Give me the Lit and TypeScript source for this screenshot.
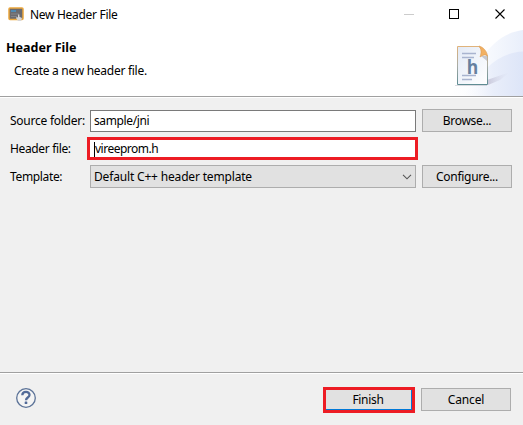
import { LitElement, html, css, svg } from "lit";
import { customElement } from "lit/decorators.js";

const appIcon = html`<svg width="17" height="16" viewBox="0 0 17 16">
  <rect x="1" y="1" width="14" height="11.500" rx="1" fill="#6b6a6e" stroke="#eba63c" stroke-width="1.500"/>
  <path d="M3 4h5" stroke="#3f9bd8" stroke-width="1.300"/>
  <path d="M3 7h8M3 9.500h6" stroke="#858488"/>
  <path d="M10 7.500v3l-1.200-.4-.8 1 2 2.900h3l1-3-2.600-1.200v-2.300z" fill="#d6d5d5"/>
</svg>`;

const headerArt = svg`
  <defs>
    <linearGradient id="sweep" x1="0" y1="0" x2="1" y2="0">
      <stop offset="0" stop-color="#fff"/><stop offset=".4" stop-color="#fbfcfe"/><stop offset="1" stop-color="#e9effb"/>
    </linearGradient>
    <linearGradient id="wave" x1="0" y1="0" x2="1" y2="0">
      <stop offset="0" stop-color="#f6f8fd" stop-opacity="0"/><stop offset=".5" stop-color="#e9eefa"/><stop offset="1" stop-color="#dde5f8"/>
    </linearGradient>
    <linearGradient id="page" x1="0" y1="0" x2="1" y2="1">
      <stop offset="0" stop-color="#e3eaf6"/><stop offset="1" stop-color="#fff"/>
    </linearGradient>
    <linearGradient id="edge" x1="0" y1="0" x2="0" y2="1">
      <stop offset="0" stop-color="#e0b37b"/><stop offset=".5" stop-color="#a9aca5"/><stop offset="1" stop-color="#5f8c93"/>
    </linearGradient>
    <linearGradient id="shade" x1="0" y1="0" x2="1" y2="0">
      <stop offset="0" stop-color="#a9a4bd" stop-opacity=".55"/><stop offset="1" stop-color="#d5d8ea" stop-opacity="0"/>
    </linearGradient>
  </defs>
  <path d="M0 67C35 35 40 6 75 1V67Z" fill="url(#sweep)"/>
  <path d="M15 67C35 40 50 24 75 22.500V67Z" fill="url(#wave)"/>
  <path d="M39 51L62 43L52 51L40 56Z" fill="url(#shade)"/>
  <path d="M7 56.500h32" stroke="#a8aab5" opacity=".4"/>
  <path d="M9.500 17.500H31L39.500 27V55.500H9.500Z" fill="url(#page)" stroke="url(#edge)"/>
  <path d="M33 27L39 27V32Z" fill="#8e8f9c" opacity=".45"/>
  <path d="M31 17C35 18 39 22 39.500 27C37 25 35 26 32 28C33.500 24 33.500 20 31 17Z" fill="#f2b062" stroke="#dc9a50" stroke-width=".6"/>
  <path d="M14 24.500H28M14 28.500H26M14 46.500H28M14 50.500H24" stroke="#a9b4cf" stroke-width="1.300"/>
  <text x="18.800" y="45" class="glyph" textLength="11.500" lengthAdjust="spacingAndGlyphs">h</text>`;

@customElement("app-root")
export class AppRoot extends LitElement {
  static styles = css`
    :host { display: flex; flex-direction: column; width: 523px; height: 425px; overflow: hidden;
      background: #f0f0f0; color: #000; font: 12px/16px "Noto Sans", sans-serif; }
    * { box-sizing: border-box; }
    svg { display: block; }
    span { white-space: pre; }
    .titlebar { display: flex; align-items: center; height: 29px; background: #fff; padding-left: 8px; }
    .title { margin-left: 5px; flex: 1; letter-spacing: -0.3px; }
    .banner { display: flex; justify-content: space-between; height: 69px; background: #fff;
      border-bottom: 1px solid #fff; box-shadow: inset 0 -1px #a0a0a0; }
    .heading { padding: 11px 0 0 6px; display: flex; flex-direction: column; }
    .name { font-weight: 700; font-size: 12.5px; letter-spacing: 0; }
    .desc { margin: 7px 0 0 8px; letter-spacing: -0.28px; }
    .art { height: 67px; width: 75px; }
    .glyph { font: 700 19px "Open Sans", sans-serif; fill: #66809f; }
    .form { flex: 1; display: grid; grid-template-columns: 80px 326px 90px;
      grid-template-rows: 23px 23px 23px; row-gap: 5px; padding: 11px 0 0 10px; align-items: center; }
    .btn { display: flex; align-items: center; justify-content: center; height: 23px; width: 90px;
      background: #e1e1e1; border: 1px solid #adadad; letter-spacing: -0.3px; }
    .form .btn { margin-left: 6px; }
    .l1 { letter-spacing: -0.25px; }
    .l2 { letter-spacing: -0.35px; }
    .l3 { letter-spacing: -0.35px; }
    .v1 { letter-spacing: -0.38px; }
    .v2 { letter-spacing: -0.5px; }
    .v3 { letter-spacing: -0.17px; }
    .field { height: 22px; background: #fff; border: 1px solid #7a7a7a; padding: 2px 0 0 3px; }
    .marked { position: relative; height: 23px; width: 331px; margin-left: -3px; border: 3px solid #ed1c24;
      background: #fff; padding: 1px 0 0 4px; display: flex; align-items: center; }
    .caret { width: 1px; height: 15px; background: #000; }
    .combo { display: flex; align-items: center; justify-content: space-between; height: 23px;
      background: #e1e1e1; border: 1px solid #adadad; padding: 0 3px; }
    .footer { height: 53px; border-top: 1px solid #a0a0a0; box-shadow: inset 0 1px #fff; display: flex;
      padding: 14px 12px 0 15px; }
    .help { flex: 1; }
    .finish { height: 26px; width: 92px; border: 3px solid #ed1c24; margin-right: 6px; }
    .finish .btn { width: 86px; height: 20px; border: 0; padding-right: 2px; box-shadow: inset -1px -1px #0078d7; }
    .cancel { margin-top: 1px; letter-spacing: -0.15px; }
  `;

  render() {
    return html`
      <div class="titlebar">${appIcon}<span class="title">New Header File</span>
        <svg width="120" height="29" viewBox="403 0 120 29" fill="none">
          <path d="M404 14.500h10" stroke="#ccc"/>
          <rect x="449.500" y="9.500" width="9" height="9" stroke="#000"/>
          <path d="M495.500 9.500l9 9M504.500 9.500l-9 9" stroke="#000" stroke-width="1.100"/>
        </svg>
      </div>
      <div class="banner">
        <div class="heading"><span class="name">Header File</span><span class="desc">Create a new header file.</span></div>
        <svg class="art" viewBox="0 0 75 67">${headerArt}</svg>
      </div>
      <div class="form">
        <span class="l1">Source folder:</span>
        <div class="field"><span class="v1">sample/jni</span></div>
        <div class="btn"><span>Browse...</span></div>
        <span class="l2">Header file:</span>
        <div class="marked"><div class="caret"></div><span class="v2">vireeprom.h</span></div>
        <i></i>
        <span class="l3">Template:</span>
        <div class="combo"><span class="v3">Default C++ header template</span>
          <svg width="10" height="6" viewBox="0 0 10 6" fill="none"><path d="M1 .8L5 4.800L9 .8" stroke="#555" stroke-width="1.100"/></svg>
        </div>
        <div class="btn"><span>Configure...</span></div>
      </div>
      <div class="footer">
        <div class="help"><svg width="22" height="22" viewBox="0 0 22 22">
          <circle cx="11" cy="11" r="9.300" fill="#f4f4f4" stroke="#5c7398" stroke-width="1.300"/>
          <path d="M7.300 8.300C7.400 3.800 14.700 4 14.500 8C14.400 10.500 11 10.500 11 13.200" fill="none" stroke="#526a98" stroke-width="2.300"/>
          <rect x="9.700" y="14.500" width="2.600" height="2.500" rx=".6" fill="#526a98"/>
        </svg></div>
        <div class="finish"><div class="btn"><span>Finish</span></div></div>
        <div class="btn cancel"><span>Cancel</span></div>
      </div>`;
  }
}
